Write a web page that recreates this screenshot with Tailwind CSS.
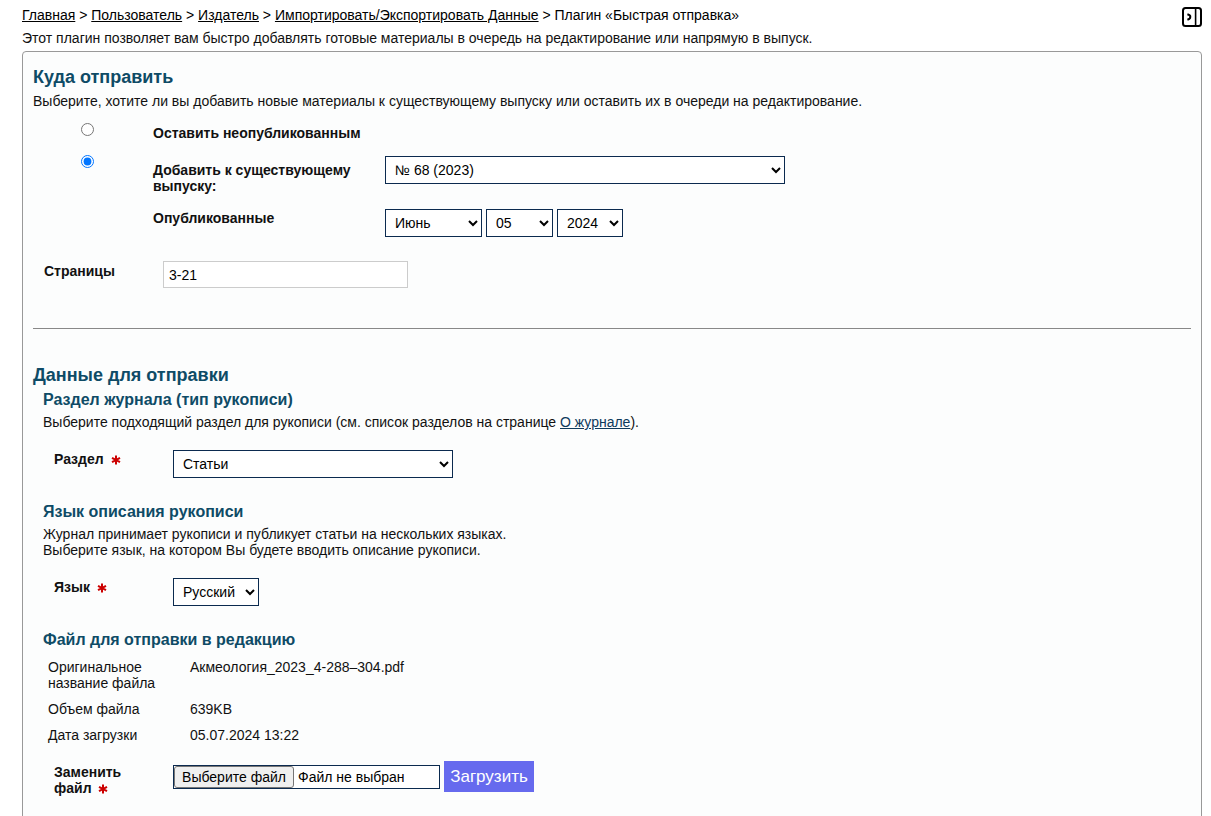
<!doctype html>
<html lang="ru">
<head>
    <meta charset="UTF-8">
    <meta name="viewport" content="width=device-width, initial-scale=1.0">
    <title>Плагин «Быстрая отправка»</title>
    <script src="https://cdn.jsdelivr.net/npm/@tailwindcss/browser@4"></script>
</head>
<body class="bg-white font-['Liberation_Sans',Arial,sans-serif] text-sm leading-4 text-[#111]">
    <div class="pl-[22px] pr-[9px] pt-[7px] pb-6">
        <header class="flex items-start justify-between">
            <nav class="text-black">
                <a href="#" class="underline">Главная</a> &gt;
                <a href="#" class="underline">Пользователь</a> &gt;
                <a href="#" class="underline">Издатель</a> &gt;
                <a href="#" class="underline">Импортировать/Экспортировать Данные</a> &gt;
                <span>Плагин «Быстрая отправка»</span>
            </nav>
            <button type="button" class="h-5 w-5" aria-label="Свернуть панель">
                <svg viewBox="0 0 20 20" class="h-5 w-5" fill="none" stroke="#000">
                    <rect x="1" y="1" width="18" height="18" rx="2.5" stroke-width="2"/>
                    <path d="M13.6 1v18" stroke-width="1.6"/>
                    <path d="M5.4 7.2q3.6 1.2 2.8 2.8q.4 1.6-2.8 2.8" stroke-width="2"/>
                </svg>
            </button>
        </header>
        <p class="mt-[3px]">Этот плагин позволяет вам быстро добавлять готовые материалы в очередь на редактирование или напрямую в выпуск.</p>

        <form class="mt-[5px] rounded border border-[#999] bg-[#fcfdfd] px-[10px] pt-[15px] pb-8">
            <!-- Куда отправить -->
            <section>
                <h3 class="text-lg leading-5 font-bold text-[#0e4b66]">Куда отправить</h3>
                <p class="mt-[6px]">Выберите, хотите ли вы добавить новые материалы к существующему выпуску или оставить их в очереди на редактирование.</p>

                <div class="mt-[14px] grid grid-cols-[109px_232px_1fr] pl-[11px]">
                    <input type="radio" id="dest-queue" name="destination" class="ml-[37px] h-[13px] w-[13px]">
                    <label for="dest-queue" class="col-span-2 mt-[2px] font-bold">Оставить неопубликованным</label>

                    <input type="radio" id="dest-issue" name="destination" class="mt-[14px] ml-[37px] h-[13px] w-[13px]" checked>
                    <label for="dest-issue" class="mt-[21px] w-[220px] font-bold">Добавить к существующему выпуску:</label>
                    <select aria-label="Выпуск" class="mt-[15px] h-7 w-[400px] border border-[#0b2a4f] bg-white px-[5px] text-black">
                        <option>№ 68 (2023)</option>
                    </select>

                    <span class="col-start-2 mt-4 font-bold">Опубликованные</span>
                    <div class="mt-[15px] flex gap-1">
                        <select aria-label="Месяц" class="h-7 w-[97px] border border-[#0b2a4f] bg-white px-[5px] text-black">
                            <option>Июнь</option>
                        </select>
                        <select aria-label="День" class="h-7 w-[67px] border border-[#0b2a4f] bg-white px-[5px] text-black">
                            <option>05</option>
                        </select>
                        <select aria-label="Год" class="h-7 w-[66px] border border-[#0b2a4f] bg-white px-[5px] text-black">
                            <option>2024</option>
                        </select>
                    </div>
                </div>

                <div class="mt-6 flex pl-[11px]">
                    <label for="pages" class="mt-[2px] w-[119px] font-bold">Страницы</label>
                    <input type="text" id="pages" value="3-21" class="h-[27px] w-[245px] border border-[#ccc] bg-white px-[5px] text-black">
                </div>
            </section>

            <hr class="mt-10 border-[#888]">

            <!-- Данные для отправки -->
            <section class="mt-9">
                <h3 class="text-lg leading-5 font-bold text-[#0e4b66]">Данные для отправки</h3>

                <div class="pl-[10px]">
                    <h4 class="mt-[5px] text-base leading-5 font-bold text-[#0e4b66]">Раздел журнала (тип рукописи)</h4>
                    <p class="mt-1">Выберите подходящий раздел для рукописи (см. список разделов на странице <a href="#" class="text-[#0e3a5c] underline">О журнале</a>).</p>
                    <div class="mt-5 flex pl-[11px]">
                        <label for="section" class="mt-px w-[119px] font-bold">Раздел
                            <svg viewBox="0 0 10 10" class="ml-[3px] inline h-[10px] w-[10px]" stroke="#c00" stroke-width="2"><path d="M5 .5v9M1 2.8l8 4.4M9 2.8L1 7.2"/></svg>
                        </label>
                        <select id="section" class="h-7 w-[280px] border border-[#0b2a4f] bg-white px-[5px] text-black">
                            <option>Статьи</option>
                        </select>
                    </div>

                    <h4 class="mt-6 text-base leading-5 font-bold text-[#0e4b66]">Язык описания рукописи</h4>
                    <p class="mt-1">Журнал принимает рукописи и публикует статьи на нескольких языках.<br>Выберите язык, на котором Вы будете вводить описание рукописи.</p>
                    <div class="mt-5 flex pl-[11px]">
                        <label for="language" class="mt-px w-[119px] font-bold">Язык
                            <svg viewBox="0 0 10 10" class="ml-[3px] inline h-[10px] w-[10px]" stroke="#c00" stroke-width="2"><path d="M5 .5v9M1 2.8l8 4.4M9 2.8L1 7.2"/></svg>
                        </label>
                        <select id="language" class="h-7 w-[86px] border border-[#0b2a4f] bg-white px-[5px] text-black">
                            <option>Русский</option>
                        </select>
                    </div>

                    <h4 class="mt-6 text-base leading-5 font-bold text-[#0e4b66]">Файл для отправки в редакцию</h4>
                    <table class="mt-1 w-full table-fixed">
                        <tr class="align-top">
                            <th scope="row" class="w-[142px] py-[5px] pr-5 pl-[5px] text-left font-normal">Оригинальное название файла</th>
                            <td class="px-[5px] py-[5px]">Акмеология_2023_4-288–304.pdf</td>
                        </tr>
                        <tr class="align-top">
                            <th scope="row" class="py-[5px] pl-[5px] text-left font-normal">Объем файла</th>
                            <td class="px-[5px] py-[5px]">639KB</td>
                        </tr>
                        <tr class="align-top">
                            <th scope="row" class="py-[5px] pl-[5px] text-left font-normal">Дата загрузки</th>
                            <td class="px-[5px] py-[5px]">05.07.2024 13:22</td>
                        </tr>
                    </table>

                    <div class="mt-[13px] flex items-start pl-[11px]">
                        <label for="upload" class="mt-[3px] w-[119px] pr-10 font-bold">Заменить файл
                            <svg viewBox="0 0 10 10" class="ml-[3px] inline h-[10px] w-[10px]" stroke="#c00" stroke-width="2"><path d="M5 .5v9M1 2.8l8 4.4M9 2.8L1 7.2"/></svg>
                        </label>
                        <div class="flex items-center gap-1">
                            <label for="upload" class="relative flex h-6 w-[267px] items-center gap-1 border border-[#0b2a4f] bg-white text-black">
                                <input type="file" id="upload" class="sr-only">
                                <span class="flex h-[22px] w-[120px] items-center justify-center rounded-[3px] border border-[#767676] bg-[#efefef] whitespace-nowrap">Выберите файл</span>
                                <span>Файл не выбран</span>
                            </label>
                            <button type="submit" class="h-[31px] w-[90px] bg-[#666aee] text-[17px] text-white">Загрузить</button>
                        </div>
                    </div>
                </div>
            </section>
        </form>
    </div>
</body>
</html>
